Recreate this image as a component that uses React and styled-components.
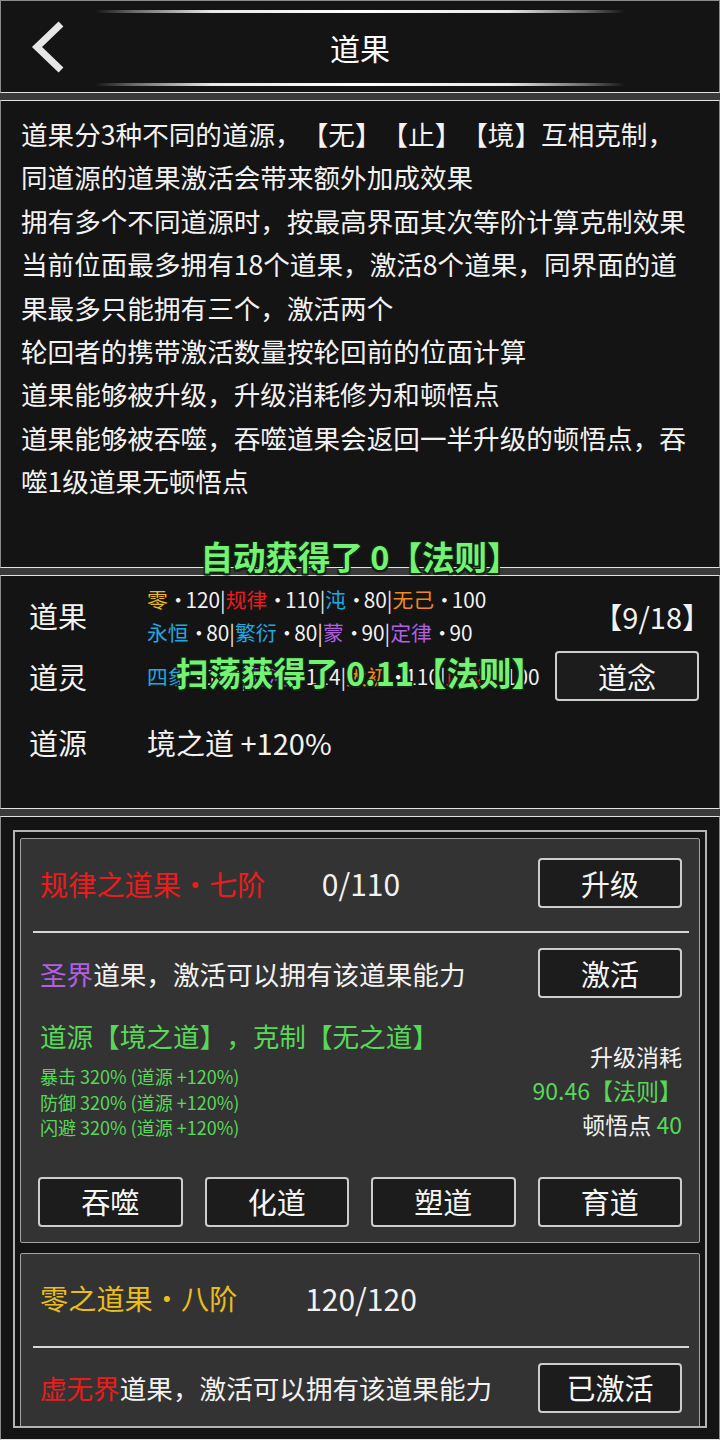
import React from 'react';
import styled, { createGlobalStyle } from 'styled-components';

const C = {
  gold: '#e9bd1e',
  red: '#ea1c1c',
  cyan: '#1ea9e0',
  orange: '#f08a1e',
  purple: '#b25fe2',
  green: '#58d858',
  toast: '#74f274',
  text: '#f2f2f2',
};

const Global = createGlobalStyle`
  html, body { margin: 0; padding: 0; background: #3a3a3a; }
  body {
    font-family: "Noto Sans CJK SC", "Noto Sans", sans-serif;
    color: ${C.text};
    text-spacing-trim: space-all;
  }
  * { box-sizing: border-box; }
`;

const Page = styled.div`
  position: relative;
  width: 720px;
  height: 1440px;
  overflow: hidden;
  display: flex;
  flex-direction: column;
  gap: 7px;
  background: #3a3a3a;
`;

const Panel = styled.section`
  flex: none;
  height: ${(p) => p.$h}px;
  background: #141414;
  border: 1px solid #e2e2e2;
  border-left-color: #8c8c8c;
  border-right-color: #8c8c8c;
`;

/* ---------- header ---------- */
const Header = styled(Panel)`
  display: flex;
  flex-direction: column;
  align-items: center;
  padding-top: 9px;
  border-top-color: #8c8c8c;
`;

const Glow = styled.div`
  width: 530px;
  height: 3px;
  border-radius: 2px;
  background: linear-gradient(
    90deg,
    rgba(255, 255, 255, 0) 0%,
    rgba(255, 255, 255, 0.35) 7%,
    #e8e8e8 22%,
    #ffffff 50%,
    #e8e8e8 78%,
    rgba(255, 255, 255, 0.35) 93%,
    rgba(255, 255, 255, 0) 100%
  );
`;

const TitleRow = styled.div`
  width: 100%;
  height: 70px;
  display: grid;
  grid-template-columns: 1fr auto 1fr;
  align-items: center;
`;

const BackButton = styled.div`
  padding-left: 28px;
  display: flex;
  align-items: center;
  margin-top: -3px;
`;

const Title = styled.h1`
  margin: -3px 0 0 0;
  font-size: 30px;
  font-weight: 400;
  color: #ffffff;
  line-height: 1;
`;

/* ---------- rules text ---------- */
const RulesPanel = styled(Panel)`
  padding: 11px 0 0 20px;
`;

const RuleLine = styled.div`
  font-size: 26.6px;
  line-height: 43.4px;
  white-space: nowrap;
  color: ${C.text};
`;

/* ---------- stats ---------- */
const StatsPanel = styled(Panel)`
  padding: 6px 20px 0 28px;
  display: flex;
  flex-direction: column;
`;

const StatRow = styled.div`
  display: grid;
  grid-template-columns: 118px 1fr auto;
  align-items: center;
  height: ${(p) => p.$h}px;
  margin-top: ${(p) => p.$mt || 0}px;
`;

const StatLabel = styled.div`
  font-size: 29px;
  line-height: 1;
  color: ${C.text};
`;

const StatValue = styled.div`
  font-size: 29px;
  color: ${C.text};
  white-space: nowrap;
`;

const Tags = styled.div`
  font-size: 20.8px;
  line-height: 33px;
  white-space: nowrap;
  color: ${C.text};
`;

const Name = styled.span`
  color: ${(p) => p.$c};
`;

const Dot = styled.span`
  display: inline-block;
  width: ${(p) => p.$w || '1em'};
  text-align: center;
`;

const Bar = styled.span`
  color: #e8e8e8;
`;

const Count = styled.div`
  font-size: 29px;
  color: ${C.text};
  margin-right: -12px;
  white-space: nowrap;
`;

const Button = styled.button`
  width: ${(p) => p.$w || 144}px;
  height: 50px;
  padding: 0;
  border: 2px solid #cdcdcd;
  border-radius: 4px;
  background: #1c1c1c;
  color: #f6f6f6;
  font-family: inherit;
  font-size: 29px;
  line-height: 1;
  justify-self: end;
  cursor: pointer;
`;

/* ---------- list ---------- */
const ListPanel = styled(Panel)`
  padding: 13px 12px 0 12px;
`;

const Frame = styled.div`
  height: 598px;
  overflow: hidden;
  border: 2px solid #b2b2b2;
  background: #141414;
  padding: 6px 5px;
  display: flex;
  flex-direction: column;
  gap: 10px;
`;

const Card = styled.article`
  flex: none;
  background: #333333;
  border: 1px solid #a2a2a2;
  border-radius: 2px;
  padding: 19px 17px 15px 19px;
`;

const CardHead = styled.div`
  display: grid;
  grid-template-columns: 1fr auto 1fr;
  align-items: center;
  height: 50px;
`;

const CardTitle = styled.div`
  font-size: 28.2px;
  color: ${(p) => p.$c};
  white-space: nowrap;
`;

const Progress = styled.div`
  font-size: 30px;
  color: ${C.text};
`;

const Divider = styled.hr`
  margin: 23px -7px 15px -7px;
  height: 2px;
  border: none;
  background: #d6d6d6;
`;

const DescRow = styled.div`
  display: flex;
  justify-content: space-between;
  align-items: center;
  height: 50px;
`;

const Desc = styled.div`
  font-size: 26.6px;
  color: ${C.text};
  white-space: nowrap;
`;

const Body = styled.div`
  display: flex;
  justify-content: space-between;
  align-items: flex-end;
  margin-top: 21px;
`;

const Effects = styled.div`
  display: flex;
  flex-direction: column;
`;

const EffectHead = styled.div`
  font-size: 26.6px;
  line-height: 34px;
  color: ${C.green};
  margin-bottom: 11px;
  white-space: nowrap;
`;

const EffectLine = styled.div`
  font-size: 18px;
  line-height: 25.5px;
  color: ${C.green};
  white-space: nowrap;
`;

const Cost = styled.div`
  display: flex;
  flex-direction: column;
  align-items: flex-end;
  font-size: 23px;
  line-height: 34px;
  color: ${C.text};
  white-space: nowrap;
`;

const Green = styled.span`
  color: ${C.green};
`;

const Actions = styled.div`
  display: grid;
  grid-template-columns: repeat(4, 1fr);
  gap: 22px;
  margin: 36px 0 0 -2px;
`;

/* ---------- toasts ---------- */
const Toast = styled.div`
  position: absolute;
  left: 0;
  right: 0;
  top: ${(p) => p.$top}px;
  text-align: center;
  font-size: 32.5px;
  font-weight: 700;
  line-height: 40px;
  color: ${C.toast};
  white-space: nowrap;
  pointer-events: none;
  text-shadow:
    -1.5px -1.5px 0 #102510, 1.5px -1.5px 0 #102510,
    -1.5px 1.5px 0 #102510, 1.5px 1.5px 0 #102510,
    0 2px 2px rgba(0, 0, 0, 0.8);
`;

const BackIcon = () => (
  <svg width="36" height="52" viewBox="0 0 36 52" aria-hidden="true">
    <polyline
      points="32,3 8,26 32,49"
      fill="none"
      stroke="#e6e6e6"
      strokeWidth="7"
      strokeLinejoin="miter"
    />
  </svg>
);

const TagList = ({ items }) => (
  <>
    {items.map((s, i) => (
      <React.Fragment key={i}>
        {i > 0 && <Bar>|</Bar>}
        <Name $c={s.c}>{s.t}</Name>
        <Dot $w="0.85em">·</Dot>
        {s.n}
      </React.Fragment>
    ))}
  </>
);

const rules = [
  '道果分3种不同的道源，【无】【止】【境】互相克制，',
  '同道源的道果激活会带来额外加成效果',
  '拥有多个不同道源时，按最高界面其次等阶计算克制效果',
  '当前位面最多拥有18个道果，激活8个道果，同界面的道',
  '果最多只能拥有三个，激活两个',
  '轮回者的携带激活数量按轮回前的位面计算',
  '道果能够被升级，升级消耗修为和顿悟点',
  '道果能够被吞噬，吞噬道果会返回一半升级的顿悟点，吞',
  '噬1级道果无顿悟点',
];

const fruitsA = [
  { t: '零', c: C.gold, n: '120' },
  { t: '规律', c: C.red, n: '110' },
  { t: '沌', c: C.cyan, n: '80' },
  { t: '无己', c: C.orange, n: '100' },
];
const fruitsB = [
  { t: '永恒', c: C.cyan, n: '80' },
  { t: '繁衍', c: C.cyan, n: '80' },
  { t: '蒙', c: C.purple, n: '90' },
  { t: '定律', c: C.purple, n: '90' },
];
const spirits = [
  { t: '四象', c: C.cyan, n: '100' },
  { t: '混沌', c: C.purple, n: '114' },
  { t: '太初', c: C.orange, n: '110' },
  { t: '血煞', c: C.red, n: '100' },
];

const effects = ['暴击', '防御', '闪避'];
const actions = ['吞噬', '化道', '塑道', '育道'];

const FruitCard = ({ title, titleColor, progress, realm, realmColor, upgrade, activate }) => (
  <Card>
    <CardHead>
      <CardTitle $c={titleColor}>
        {title[0]}
        <Dot>·</Dot>
        {title[1]}
      </CardTitle>
      <Progress>{progress}</Progress>
      {upgrade ? <Button>{upgrade}</Button> : <div />}
    </CardHead>
    <Divider />
    <DescRow>
      <Desc>
        <Name $c={realmColor}>{realm}</Name>道果，激活可以拥有该道果能力
      </Desc>
      <Button>{activate}</Button>
    </DescRow>
    <Body>
      <Effects>
        <EffectHead>道源【境之道】，克制【无之道】</EffectHead>
        {effects.map((e) => (
          <EffectLine key={e}>{e} 320% (道源 +120%)</EffectLine>
        ))}
      </Effects>
      <Cost>
        <div>升级消耗</div>
        <Green>90.46【法则】</Green>
        <div>
          顿悟点 <Green>40</Green>
        </div>
      </Cost>
    </Body>
    <Actions>
      {actions.map((a) => (
        <Button key={a} $w={144.5}>
          {a}
        </Button>
      ))}
    </Actions>
  </Card>
);

export default function App() {
  return (
    <>
      <Global />
      <Page>
        <Header $h={93}>
          <Glow />
          <TitleRow>
            <BackButton>
              <BackIcon />
            </BackButton>
            <Title>道果</Title>
            <div />
          </TitleRow>
          <Glow />
        </Header>

        <RulesPanel $h={468}>
          {rules.map((r) => (
            <RuleLine key={r}>{r}</RuleLine>
          ))}
        </RulesPanel>

        <StatsPanel $h={234}>
          <StatRow $h={67}>
            <StatLabel>道果</StatLabel>
            <Tags>
              <div>
                <TagList items={fruitsA} />
              </div>
              <div>
                <TagList items={fruitsB} />
              </div>
            </Tags>
            <Count>【9/18】</Count>
          </StatRow>
          <StatRow $h={50} $mt={2}>
            <StatLabel>道灵</StatLabel>
            <Tags>
              <TagList items={spirits} />
            </Tags>
            <Button>道念</Button>
          </StatRow>
          <StatRow $h={50} $mt={16}>
            <StatLabel>道源</StatLabel>
            <StatValue>境之道 +120%</StatValue>
          </StatRow>
        </StatsPanel>

        <ListPanel $h={624}>
          <Frame>
            <FruitCard
              title={['规律之道果', '七阶']}
              titleColor={C.red}
              progress="0/110"
              realm="圣界"
              realmColor={C.purple}
              upgrade="升级"
              activate="激活"
            />
            <FruitCard
              title={['零之道果', '八阶']}
              titleColor={C.gold}
              progress="120/120"
              realm="虚无界"
              realmColor={C.red}
              activate="已激活"
            />
          </Frame>
        </ListPanel>

        <Toast $top={536}>自动获得了 0【法则】</Toast>
        <Toast $top={652}>扫荡获得了 0.11【法则】</Toast>
      </Page>
    </>
  );
}
